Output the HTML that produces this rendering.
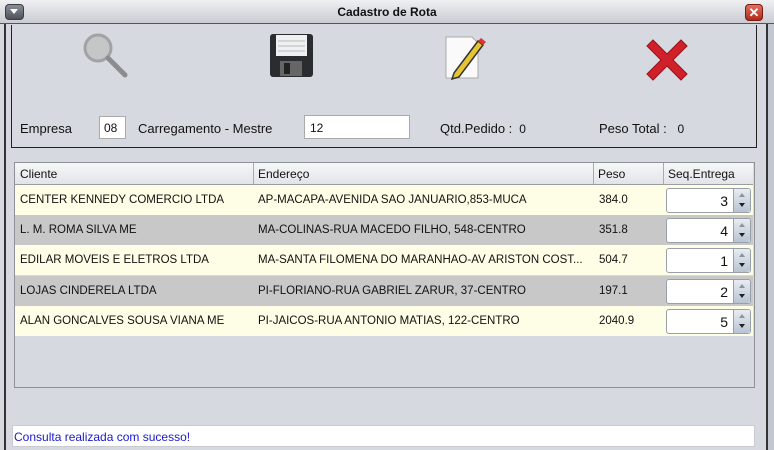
<!DOCTYPE html>
<html><head><meta charset="utf-8"><style>
*{margin:0;padding:0;box-sizing:border-box}
body{width:774px;height:450px;background:#d6d9df;font-family:"Liberation Sans",sans-serif;position:relative;overflow:hidden}
.abs{position:absolute}
.t{font-size:12px;color:#111;white-space:nowrap}
.row{position:absolute;left:15px;width:738px;height:30px;font-size:11.5px;color:#111}
.row span{position:absolute;top:9px;white-space:nowrap}
.spin{position:absolute;left:651px;top:3px;width:85px;height:25px;background:#fff;border:1px solid #9aa0a8;border-radius:3px}
.spin b{position:absolute;right:22px;top:4px;font-weight:normal;font-size:14px}
.spin i{position:absolute;right:0;top:0;width:17px;height:23px;background:linear-gradient(#e8ecf2,#b8c4d2);border-left:1px solid #9aa0a8;border-radius:0 3px 3px 0}
.spin i:before{content:"";position:absolute;left:5px;top:4px;border:3px solid transparent;border-bottom:4px solid #8a94a0;border-top:0}
.spin i:after{content:"";position:absolute;left:5px;top:14px;border:3px solid transparent;border-top:4px solid #222;border-bottom:0}
</style></head><body>
<div class="abs" style="left:0;top:0;width:774px;height:24px;background:linear-gradient(#f0f0f2,#c9ccd2);border-bottom:1px solid #555"></div>
<div class="abs" style="left:5px;top:4px;width:19px;height:16px;border-radius:4px;background:linear-gradient(#8a8e98,#4e525c);border:1px solid #3a3d44"></div>
<div class="abs" style="left:10px;top:9px;border:4px solid transparent;border-top:5px solid #fff;border-bottom:0"></div>
<div class="abs" style="left:0;top:5px;width:774px;text-align:center;font-size:12px;font-weight:bold;color:#111">Cadastro de Rota</div>
<div class="abs" style="left:745px;top:4px;width:18px;height:17px;border-radius:4px;background:linear-gradient(#e27060,#b02a18);border:1px solid #7a1a10;color:#fff;font-size:13px;font-weight:bold;text-align:center;line-height:15px">✕</div>
<div class="abs" style="left:4px;top:24px;width:2px;height:426px;background:#333"></div>
<div class="abs" style="left:766px;top:24px;width:2px;height:426px;background:#333"></div>
<div class="abs" style="left:768px;top:24px;width:6px;height:426px;background:#c3c7cf"></div>
<div class="abs" style="left:11px;top:25px;width:746px;height:123px;border:1px solid #222;border-top:0"></div>
<!-- icons -->
<svg class="abs" style="left:80px;top:30px" width="50" height="50"><circle cx="18" cy="18" r="13" fill="#c4c6c8" stroke="#a0a2a4" stroke-width="3"/><line x1="28" y1="28" x2="45" y2="45" stroke="#8a8c8e" stroke-width="5" stroke-linecap="round"/></svg>
<svg class="abs" style="left:269px;top:33px" width="46" height="46"><rect x="1" y="1" width="43" height="43" rx="3" fill="#2a2c30"/><rect x="7" y="2" width="31" height="21" fill="#eef0f2"/><line x1="9" y1="8" x2="36" y2="8" stroke="#bbb"/><line x1="9" y1="13" x2="36" y2="13" stroke="#bbb"/><line x1="9" y1="18" x2="36" y2="18" stroke="#bbb"/><rect x="11" y="28" width="22" height="15" fill="#666"/><rect x="15" y="30" width="6" height="11" fill="#222"/></svg>
<svg class="abs" style="left:444px;top:33px" width="48" height="48"><path d="M2 4h26l6 6v35H2z" fill="#fafafa" stroke="#aaa"/><path d="M10 40l24-32 5 4-24 32-7 2z" fill="#e6c432" stroke="#333" stroke-width="1.5"/><path d="M34 8l3-3 5 4-3 3z" fill="#d33"/></svg>
<svg class="abs" style="left:643px;top:36px" width="48" height="48"><path d="M4 10l6-6 14 14 14-14 6 6-14 14 14 14-6 6-14-14-14 14-6-6 14-14z" fill="#d0202a" stroke="#9a1018"/></svg>
<div class="abs t" style="left:20px;top:121px;font-size:13px">Empresa</div>
<div class="abs" style="left:99px;top:116px;width:27px;height:23px;background:#fff;border:1px solid #aaa"></div>
<div class="abs t" style="left:104px;top:121px">08</div>
<div class="abs t" style="left:138px;top:121px;font-size:13px">Carregamento - Mestre</div>
<div class="abs" style="left:304px;top:115px;width:106px;height:24px;background:#fff;border:1px solid #aaa"></div>
<div class="abs t" style="left:310px;top:121px">12</div>
<div class="abs t" style="left:440px;top:121px;font-size:13px">Qtd.Pedido : <span style="font-size:12px">&nbsp;0</span></div>
<div class="abs t" style="left:599px;top:121px;font-size:13px">Peso Total : &nbsp;&nbsp;<span style="font-size:12px">0</span></div>
<!-- table -->
<div class="abs" style="left:14px;top:162px;width:741px;height:226px;border:1px solid #8e9196;background:#d6d9df"></div>
<div class="abs" style="left:15px;top:163px;width:738px;height:22px;background:linear-gradient(#f6f7f9,#e2e4e8);border-bottom:1px solid #9a9da2;font-size:12px;color:#111">
<span class="abs" style="left:5px;top:4px">Cliente</span><span class="abs" style="left:243px;top:4px">Endereço</span><span class="abs" style="left:583px;top:4px">Peso</span><span class="abs" style="left:653px;top:4px">Seq.Entrega</span>
<div class="abs" style="left:238px;top:0;width:1px;height:21px;background:#aaa"></div><div class="abs" style="left:578px;top:0;width:1px;height:21px;background:#aaa"></div><div class="abs" style="left:648px;top:0;width:1px;height:21px;background:#aaa"></div></div>
<div class="row" style="top:185px;background:#fefee6"><span style="left:5px">CENTER KENNEDY COMERCIO LTDA</span><span style="left:243px">AP-MACAPA-AVENIDA SAO JANUARIO,853-MUCA</span><span style="left:584px">384.0</span><div class="spin"><b>3</b><i></i></div></div>
<div class="row" style="top:215px;background:#c8c8c8"><span style="left:5px">L. M. ROMA SILVA ME</span><span style="left:243px">MA-COLINAS-RUA MACEDO FILHO, 548-CENTRO</span><span style="left:584px">351.8</span><div class="spin"><b>4</b><i></i></div></div>
<div class="row" style="top:245px;background:#fefee6"><span style="left:5px">EDILAR MOVEIS E ELETROS LTDA</span><span style="left:243px">MA-SANTA FILOMENA DO MARANHAO-AV ARISTON COST...</span><span style="left:584px">504.7</span><div class="spin"><b>1</b><i></i></div></div>
<div class="row" style="top:276px;background:#c8c8c8"><span style="left:5px">LOJAS CINDERELA LTDA</span><span style="left:243px">PI-FLORIANO-RUA GABRIEL ZARUR, 37-CENTRO</span><span style="left:584px">197.1</span><div class="spin"><b>2</b><i></i></div></div>
<div class="row" style="top:306px;background:#fefee6"><span style="left:5px">ALAN GONCALVES SOUSA VIANA ME</span><span style="left:243px">PI-JAICOS-RUA ANTONIO MATIAS, 122-CENTRO</span><span style="left:584px">2040.9</span><div class="spin"><b>5</b><i></i></div></div>
<div class="abs" style="left:663px;top:185px;width:90px;height:151px;background:#d6d9df;z-index:-1"></div>
<div class="abs" style="left:12px;top:425px;width:743px;height:22px;background:#fff;border:1px solid #c8ccd2"></div>
<div class="abs" style="left:14px;top:430px;font-size:12px;color:#1a1ad0;white-space:nowrap">Consulta realizada com sucesso!</div>
</body></html>
